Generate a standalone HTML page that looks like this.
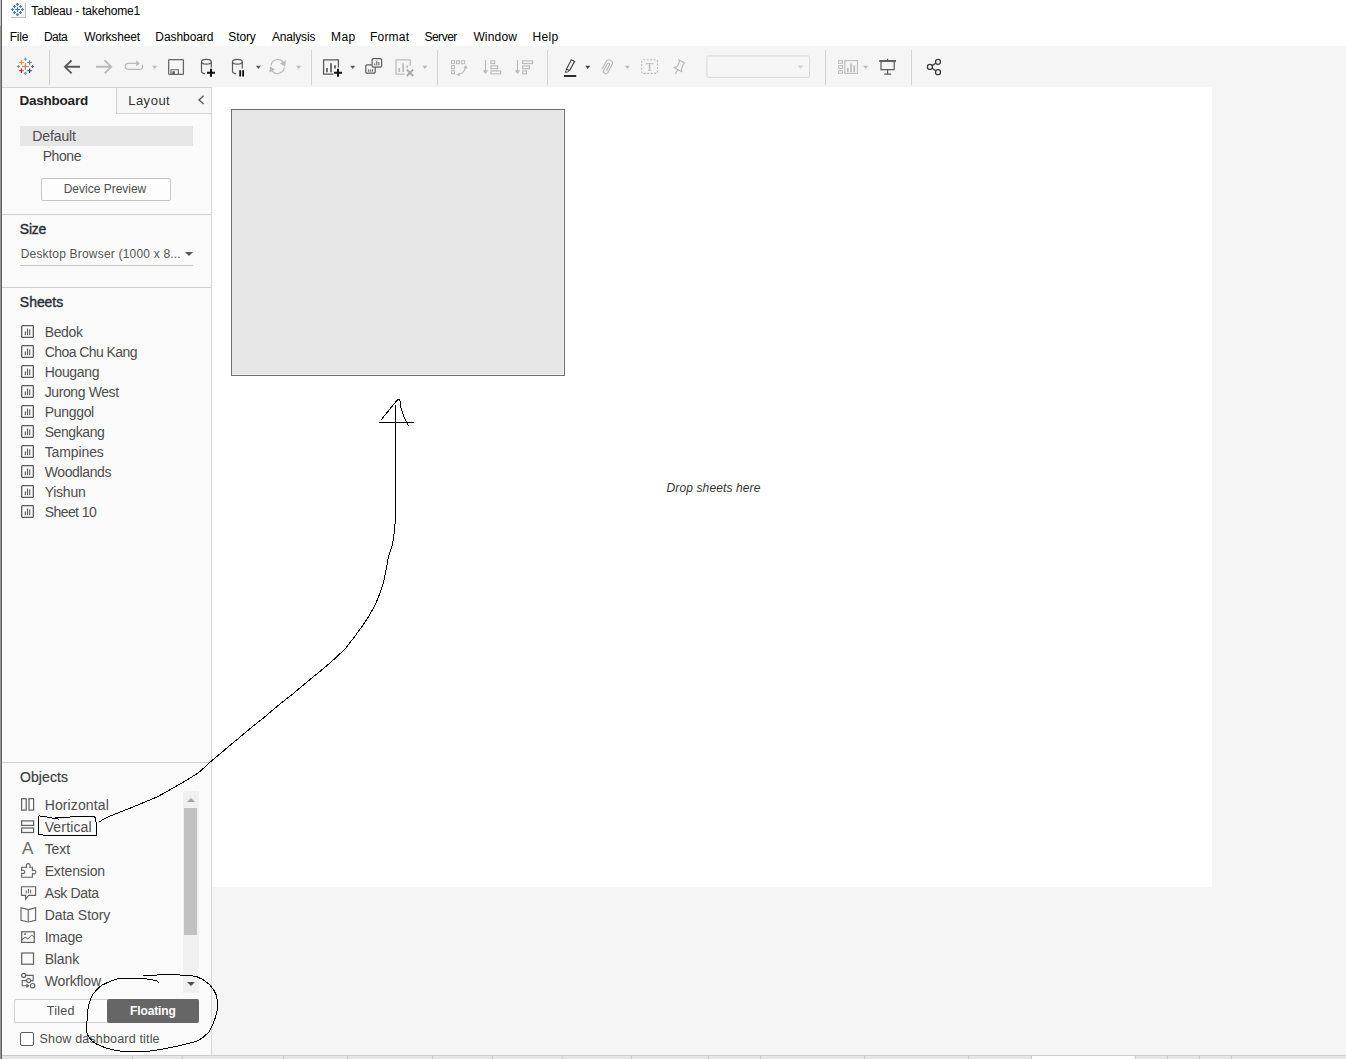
<!DOCTYPE html>
<html lang="en">
<head>
<meta charset="utf-8">
<title>Tableau - takehome1</title>
<style>
*{box-sizing:border-box;margin:0;padding:0}
html,body{width:1346px;height:1059px;overflow:hidden;background:#fff}
body{position:relative;font-family:"Liberation Sans",sans-serif;font-size:12px;color:#333}
.abs{position:absolute}
.t{position:absolute;white-space:nowrap;line-height:16px}
#titlebar{left:0;top:0;width:1346px;height:22px;background:#fff}
#menubar{left:0;top:22px;width:1346px;height:24px;background:#fff}
#menubar .t{top:6px;color:#000;font-size:12px}
#toolbar{left:0;top:46px;width:1346px;height:41px;background:#f5f5f5}
.vsep{position:absolute;width:1px;background:#d4d4d4;top:4px;height:35px}
#leftedge{left:0;top:0;width:2px;height:1059px;background:#5e5e5e;border-left:1px solid #969696}
#leftedge i{position:absolute;left:-1px;top:0;width:1px;height:26px;background:#c4c4c4}
#side{left:2px;top:87px;width:210px;height:968px;background:#fafafa;border-right:1px solid #d6d6d6}
.hdiv{position:absolute;left:0;width:209px;height:1px;background:#d0d0d0}
.sec{font-weight:bold;font-size:13px;color:#333}
.it{font-size:13px;color:#4a4a4a}
#work{left:212px;top:87px;width:1134px;height:968px;background:#f5f5f5}
#canvas{left:0;top:0;width:1000px;height:800px;background:#fff}
#box{left:19px;top:22px;width:334px;height:267px;background:#e6e6e6;border:1px solid #6e6e6e;box-shadow:inset -1px -1px 0 #f0f0f0}
#tabs{left:0;top:1055px;width:1346px;height:4px;background:#e6e6e6;border-top:1px solid #cdcdcd}
#tabs i{position:absolute;top:0;width:1px;height:4px;background:#c6c6c6}
#annot{left:0;top:0;width:1346px;height:1059px;pointer-events:none}
</style>
</head>
<body>
<div id="titlebar" class="abs">
  <svg class="abs" style="left:10px;top:2px" width="17" height="17" viewBox="10 2 17 17" fill="none">
    <rect x="11" y="2.9" width="13" height="13.2" fill="#f3f5f8"/>
    <path d="M25.4 2.9V17.4H11" stroke="#b6b6b6" stroke-width="1"/>
    <path d="M17.5 7.2v4.6M15.2 9.5h4.6" stroke="#41789e" stroke-width="1.1"/>
    <path d="M17.5 3v2.8M16.1 4.4h2.8M17.5 13.2v2.8M16.1 14.6h2.8M12.5 8.1v2.8M11.1 9.5h2.8M22.5 8.1v2.8M21.1 9.5h2.8M14.5 5.1v2.8M13.1 6.5h2.8M20.5 5.1v2.8M19.1 6.5h2.8M14.5 11.1v2.8M13.1 12.5h2.8M20.5 11.1v2.8M19.1 12.5h2.8" stroke="#41789e" stroke-width="1.2"/>
  </svg>
  <div id="t0" class="t" style="left:31.32px;top:3px;font-size:12px;letter-spacing:-0.18px;color:#000;">Tableau - takehome1</div>
</div>
<div id="menubar" class="abs">
  <div id="t1" class="t" style="left:9.78px;top:7px;font-size:12px;letter-spacing:-0.224px;color:#000;">File</div>
  <div id="t2" class="t" style="left:43.94px;top:7px;font-size:12px;letter-spacing:-0.568px;color:#000;">Data</div>
  <div id="t3" class="t" style="left:84.33px;top:7px;font-size:12px;letter-spacing:-0.184px;color:#000;">Worksheet</div>
  <div id="t4" class="t" style="left:155.31px;top:7px;font-size:12px;letter-spacing:-0.07px;color:#000;">Dashboard</div>
  <div id="t5" class="t" style="left:228.37px;top:7px;font-size:12px;letter-spacing:-0.141px;color:#000;">Story</div>
  <div id="t6" class="t" style="left:272.06px;top:7px;font-size:12px;letter-spacing:-0.192px;color:#000;">Analysis</div>
  <div id="t7" class="t" style="left:330.93px;top:7px;font-size:12px;letter-spacing:0.486px;color:#000;">Map</div>
  <div id="t8" class="t" style="left:370.05px;top:7px;font-size:12px;letter-spacing:0.192px;color:#000;">Format</div>
  <div id="t9" class="t" style="left:424.41px;top:7px;font-size:12px;letter-spacing:-0.482px;color:#000;">Server</div>
  <div id="t10" class="t" style="left:473.39px;top:7px;font-size:12px;letter-spacing:0.167px;color:#000;">Window</div>
  <div id="t11" class="t" style="left:532.62px;top:7px;font-size:12px;letter-spacing:0.276px;color:#000;">Help</div>
</div>
<div id="toolbar" class="abs">
  <div class="vsep" style="left:49px"></div>
  <div class="vsep" style="left:311px"></div>
  <div class="vsep" style="left:437px"></div>
  <div class="vsep" style="left:547px"></div>
  <div class="vsep" style="left:825px"></div>
  <div class="vsep" style="left:911px"></div>
  <svg class="abs" style="left:0;top:0" width="1346" height="41" viewBox="0 46 1346 41" fill="none" stroke-linecap="butt">
  <!-- tableau logo -->
  <g stroke-width="1.15">
    <path d="M25.4 63.2v6.6M22.1 66.5h6.6" stroke="#e8762d"/>
    <path d="M21.4 60.2v4.6M19.1 62.5h4.6" stroke="#eb9129"/>
    <path d="M29.6 60.2v4.6M27.3 62.5h4.6" stroke="#5b879b"/>
    <path d="M21.4 68.4v4.6M19.1 70.7h4.6" stroke="#c72037"/>
    <path d="M29.6 68.4v4.6M27.3 70.7h4.6" stroke="#1f457e"/>
    <path d="M25.4 57.7v3M23.9 59.2h3" stroke="#7099a6"/>
    <path d="M25.4 71.9v3M23.9 73.4h3" stroke="#7f8fa8"/>
    <path d="M18.5 65v3M17 66.5h3" stroke="#7099a6"/>
    <path d="M32.5 65v3M31 66.5h3" stroke="#5c6692"/>
  </g>
  <!-- back / forward -->
  <path d="M80 66.8H65.4M71.6 60.4L65 66.8L71.6 73.4" stroke="#5a5a5a" stroke-width="1.9"/>
  <path d="M96 66.8H110.8M104.6 60.4L111.2 66.8L104.6 73.4" stroke="#b9b9b9" stroke-width="1.9"/>
  <!-- redo loop -->
  <path d="M138 63.4H128.2a3 3 0 0 0 0 6H139.6a3 3 0 0 0 2.6-4.6" stroke="#b9b9b9" stroke-width="1.2"/>
  <path d="M136.2 60.2L139.8 63.4L136.2 66.6Z" fill="#b9b9b9" stroke="none"/>
  <path d="M152.2 65.8h5l-2.5 3.2z" fill="#b9b9b9"/>
  <!-- save -->
  <rect x="168.7" y="59.7" width="14.7" height="14.6" rx="0.6" stroke="#666" stroke-width="1.25"/>
  <path d="M171 74V69.7H178.4V74" stroke="#666" stroke-width="1.1"/>
  <rect x="172.3" y="71.3" width="2.5" height="3" fill="#5a5a5a"/>
  <!-- data source + -->
  <ellipse cx="206.4" cy="61.8" rx="4.9" ry="2.4" stroke="#5a5a5a" stroke-width="1.2"/>
  <path d="M201.5 61.8V71.4c0 1.2 1.4 2 3.6 2.4M211.3 61.8V67.6" stroke="#5a5a5a" stroke-width="1.2"/>
  <path d="M211 68.8v8M207 72.8h8" stroke="#111" stroke-width="2"/>
  <!-- data source pause -->
  <ellipse cx="237.4" cy="61.8" rx="4.9" ry="2.4" stroke="#5a5a5a" stroke-width="1.2"/>
  <path d="M232.5 61.8V71.4c0 1.2 1.4 2 3.6 2.4M242.3 61.8V68.4" stroke="#5a5a5a" stroke-width="1.2"/>
  <path d="M240.2 70.2v6.4M243.1 70.2v6.4" stroke="#111" stroke-width="1.8"/>
  <path d="M255.9 65.8h5l-2.5 3.2z" fill="#5a5a5a"/>
  <!-- refresh -->
  <path d="M271 65.6a6.8 6.8 0 0 1 12.2 -3.4M284.2 67.4a6.8 6.8 0 0 1 -12.2 3.4" stroke="#b9b9b9" stroke-width="1.2"/>
  <path d="M285.9 60.4L285.2 66.4L280 63.6Z M269.3 72.6L270 66.6L275.2 69.4Z" fill="#b9b9b9"/>
  <path d="M296.2 65.8h5l-2.5 3.2z" fill="#b9b9b9"/>
  <!-- new worksheet -->
  <path d="M338.4 67.4V59.8H323.6V74.2H333.4" stroke="#5a5a5a" stroke-width="1.3"/>
  <path d="M327 68v4.2M331 63.2v9M335 65.2v3.4" stroke="#5a5a5a" stroke-width="1.7"/>
  <path d="M338 68.8v8M334 72.8h8" stroke="#111" stroke-width="2"/>
  <path d="M350.2 65.8h5l-2.5 3.2z" fill="#5a5a5a"/>
  <!-- duplicate -->
  <path d="M371.6 64.8H367a1.2 1.2 0 0 0 -1.2 1.2V72a1.2 1.2 0 0 0 1.2 1.2H374a1.2 1.2 0 0 0 1.2 -1.2V67.6" stroke="#5a5a5a" stroke-width="1.2"/>
  <rect x="372.1" y="58.7" width="9.5" height="8.4" rx="1.3" stroke="#5a5a5a" stroke-width="1.2"/>
  <path d="M374.8 63.4v2M376.8 60.8v4.6M378.8 62v3.4M368.4 69.4v2.4M370.4 69.4v2.4M372.4 69.4v2.4" stroke="#5a5a5a" stroke-width="1"/>
  <!-- clear sheet -->
  <path d="M410.2 66V59.8H396V74.2H404.6" stroke="#b9b9b9" stroke-width="1.2"/>
  <path d="M399.2 68v4M403.2 63.2v8.8M407.2 65.2v2.6" stroke="#b9b9b9" stroke-width="1.7"/>
  <path d="M406.8 69.6L413.2 76M413.2 69.6L406.8 76" stroke="#a9a9a9" stroke-width="1.9"/>
  <path d="M422.4 65.8h5l-2.5 3.2z" fill="#b9b9b9"/>
  <!-- swap -->
  <g stroke="#b9b9b9" stroke-width="1">
    <rect x="451.5" y="60.7" width="3" height="3"/><rect x="456.6" y="60.7" width="3" height="3"/><rect x="461.7" y="60.7" width="3" height="3"/>
    <rect x="451.5" y="65.7" width="3" height="3"/><rect x="451.5" y="70.7" width="3" height="3"/>
    <path d="M458.6 74.4c4 -1 6.4 -3.6 7 -7.4" stroke-width="1.2"/>
  </g>
  <path d="M465.8 65L468 68.4L463.4 68Z M456.4 74.8L459.8 72.6L459.6 76.6Z" fill="#b9b9b9"/>
  <!-- sort asc -->
  <g stroke="#b9b9b9" stroke-width="1.1">
    <path d="M485.5 60v11"/>
    <rect x="490.9" y="60.8" width="3.8" height="2.8"/><rect x="490.9" y="65.9" width="6.8" height="2.8"/><rect x="490.9" y="71" width="9.8" height="2.8"/>
    <path d="M517.5 60v11"/>
    <rect x="522.7" y="60.8" width="9.8" height="2.8"/><rect x="522.7" y="65.9" width="6.8" height="2.8"/><rect x="522.7" y="71" width="3.8" height="2.8"/>
  </g>
  <path d="M482.8 70.2h5.4l-2.7 3.8z M514.8 70.2h5.4l-2.7 3.8z" fill="#b9b9b9"/>
  <!-- highlighter -->
  <path d="M571.4 59.8L574.6 61.4L569.6 70.6L566.4 69.2Z" stroke="#444" stroke-width="1.2"/>
  <path d="M566.6 69.4L565.2 72.4L567.4 72L569.4 70.8" stroke="#444" stroke-width="0.9"/>
  <path d="M564 76h12.2" stroke="#222" stroke-width="1.9"/>
  <path d="M585.2 65.8h5l-2.5 3.2z" fill="#444"/>
  <!-- paperclip -->
  <g transform="translate(607.2 66.6) rotate(208) scale(0.7) translate(-12.5 -12)"><path d="M17.25 6V17.5a4.75 4.75 0 0 1 -9.5 0V5a3.25 3.25 0 0 1 6.5 0V15.5a1.75 1.75 0 0 1 -3.5 0V6" stroke="#b9b9b9" stroke-width="1.6"/></g>
  <path d="M624.9 65.8h5l-2.5 3.2z" fill="#b9b9b9"/>
  <!-- text box -->
  <rect x="641.7" y="59.7" width="15.8" height="13.7" rx="1.5" stroke="#b9b9b9" stroke-width="1.15" stroke-dasharray="2 1.45"/>
  <!-- pin -->
  <path d="M678.7 59.7L684.8 62.9L683.3 64.1L681.3 69.5L682 71.8L673.9 67.6L676.4 66.7L677.7 65.9L679.6 61.2Z M677.7 69.9L675.2 74" stroke="#b9b9b9" stroke-width="1.15" stroke-linejoin="round"/>
  <!-- dropdown -->
  <rect x="706.9" y="55.9" width="102.6" height="21.4" rx="1.5" fill="#f6f6f6" stroke="#d9d9d9" stroke-width="1"/>
  <path d="M797.8 65.6h5.6l-2.8 3.2z" fill="#d0d0d0"/>
  <!-- show me -->
  <g stroke="#b9b9b9" stroke-width="1">
    <rect x="838.6" y="60.7" width="4" height="2.6"/><rect x="838.6" y="65.7" width="4" height="2.6"/><rect x="838.6" y="70.7" width="4" height="2.6"/>
    <rect x="844.8" y="60.6" width="12.6" height="12.8"/>
    <path d="M847.8 68v4.2M851 63.4v8.8M854.2 65.4v6.8" stroke-width="1.7"/>
  </g>
  <path d="M863.2 65.8h5l-2.5 3.2z" fill="#b9b9b9"/>
  <!-- presentation -->
  <path d="M879.2 61h16.8" stroke="#5a5a5a" stroke-width="1.9"/>
  <path d="M887.6 58.8v2M881 61.4V69.6H894.2V61.4M887.6 69.6V74.2M884.2 74.2H891.2" stroke="#5a5a5a" stroke-width="1.2"/>
  <!-- share -->
  <g stroke="#3a3a3a" stroke-width="1.3">
    <circle cx="938" cy="61.8" r="2.5"/><circle cx="929.9" cy="66.9" r="2.5"/><circle cx="938" cy="72.2" r="2.5"/>
    <path d="M932.1 65.6L935.8 63.2M932.1 68.3L935.8 70.8"/>
  </g>
</svg>
<div class="t" style="left:644px;top:13px;width:11px;text-align:center;font-family:'Liberation Serif',serif;font-size:11.5px;line-height:16px;color:#adadad">T</div>
</div>
<div id="side" class="abs">
  <div id="t12" class="t" style="left:17.51px;top:6px;font-size:13.5px;letter-spacing:-0.232px;font-weight:bold;color:#1f1f1f;">Dashboard</div>
  <div class="abs" style="left:114px;top:0;width:95px;height:27px;border-left:1px solid #d2d2d2;border-bottom:1px solid #d2d2d2;background:#f7f7f7"></div>
  <div class="hdiv" style="top:0;background:#d4d4d4"></div>
  <div id="t13" class="t" style="left:126.15px;top:6px;font-size:13px;letter-spacing:0.512px;color:#333;">Layout</div>
  <svg class="abs" style="left:194px;top:7px" width="10" height="12" viewBox="0 0 10 12" fill="none" stroke="#555" stroke-width="1.3"><path d="M7.6 1.8 L3 5.9 L7.6 10"/></svg>
  <div class="abs" style="left:18px;top:39px;width:173px;height:20px;background:#e6e6e6"></div>
  <div id="t14" class="t" style="left:30.34px;top:41px;font-size:14px;letter-spacing:-0.123px;color:#4d4d4d;">Default</div>
  <div id="t15" class="t" style="left:40.64px;top:61px;font-size:14px;letter-spacing:-0.408px;color:#4d4d4d;">Phone</div>
  <div class="abs" style="left:39px;top:91px;width:130px;height:23px;border:1px solid #c6c6c6;border-radius:2px;background:#fdfdfd"></div>
  <div id="t16" class="t" style="left:61.71px;top:94px;font-size:12px;letter-spacing:-0.009px;color:#4d4d4d;">Device Preview</div>
  <div class="hdiv" style="top:127px"></div>
  <div id="t17" class="t" style="left:17.79px;top:134px;font-size:14px;letter-spacing:-0.241px;-webkit-text-stroke:0.4px #2b2f36;color:#2b2f36;">Size</div>
  <div id="t18" class="t" style="left:18.67px;top:159px;font-size:12px;letter-spacing:0.196px;color:#555;">Desktop Browser (1000 x 8...</div>
  <div class="abs" style="left:18px;top:178px;width:173px;height:1px;background:#c8c8c8"></div>
  <div class="abs" style="left:183px;top:165px;width:0;height:0;border-left:4px solid transparent;border-right:4px solid transparent;border-top:4px solid #555"></div>
  <div class="hdiv" style="top:200px"></div>
  <div id="t19" class="t" style="left:17.87px;top:207px;font-size:14px;letter-spacing:-0.054px;-webkit-text-stroke:0.4px #2b2f36;color:#2b2f36;">Sheets</div>
  <svg class="abs" style="left:19px;top:238px" width="13" height="13" viewBox="0 0 13 13"><rect x="0.65" y="0.65" width="11.7" height="11.7" rx="0.8" fill="none" stroke="#5c5c5c" stroke-width="1.3"/><path d="M4.35 6.4v3.8M6.5 3.6v6.6M8.65 4.4v5.8" stroke="#5c5c5c" stroke-width="1.15" fill="none"/></svg>
  <div id="t20" class="t" style="left:42.65px;top:237px;font-size:14px;letter-spacing:-0.326px;color:#4d4d4d;">Bedok</div>
  <svg class="abs" style="left:19px;top:258px" width="13" height="13" viewBox="0 0 13 13"><rect x="0.65" y="0.65" width="11.7" height="11.7" rx="0.8" fill="none" stroke="#5c5c5c" stroke-width="1.3"/><path d="M4.35 6.4v3.8M6.5 3.6v6.6M8.65 4.4v5.8" stroke="#5c5c5c" stroke-width="1.15" fill="none"/></svg>
  <div id="t21" class="t" style="left:42.65px;top:257px;font-size:14px;letter-spacing:-0.554px;color:#4d4d4d;">Choa Chu Kang</div>
  <svg class="abs" style="left:19px;top:278px" width="13" height="13" viewBox="0 0 13 13"><rect x="0.65" y="0.65" width="11.7" height="11.7" rx="0.8" fill="none" stroke="#5c5c5c" stroke-width="1.3"/><path d="M4.35 6.4v3.8M6.5 3.6v6.6M8.65 4.4v5.8" stroke="#5c5c5c" stroke-width="1.15" fill="none"/></svg>
  <div id="t22" class="t" style="left:42.65px;top:277px;font-size:14px;letter-spacing:-0.322px;color:#4d4d4d;">Hougang</div>
  <svg class="abs" style="left:19px;top:298px" width="13" height="13" viewBox="0 0 13 13"><rect x="0.65" y="0.65" width="11.7" height="11.7" rx="0.8" fill="none" stroke="#5c5c5c" stroke-width="1.3"/><path d="M4.35 6.4v3.8M6.5 3.6v6.6M8.65 4.4v5.8" stroke="#5c5c5c" stroke-width="1.15" fill="none"/></svg>
  <div id="t23" class="t" style="left:42.65px;top:297px;font-size:14px;letter-spacing:-0.387px;color:#4d4d4d;">Jurong West</div>
  <svg class="abs" style="left:19px;top:318px" width="13" height="13" viewBox="0 0 13 13"><rect x="0.65" y="0.65" width="11.7" height="11.7" rx="0.8" fill="none" stroke="#5c5c5c" stroke-width="1.3"/><path d="M4.35 6.4v3.8M6.5 3.6v6.6M8.65 4.4v5.8" stroke="#5c5c5c" stroke-width="1.15" fill="none"/></svg>
  <div id="t24" class="t" style="left:42.65px;top:317px;font-size:14px;letter-spacing:-0.299px;color:#4d4d4d;">Punggol</div>
  <svg class="abs" style="left:19px;top:338px" width="13" height="13" viewBox="0 0 13 13"><rect x="0.65" y="0.65" width="11.7" height="11.7" rx="0.8" fill="none" stroke="#5c5c5c" stroke-width="1.3"/><path d="M4.35 6.4v3.8M6.5 3.6v6.6M8.65 4.4v5.8" stroke="#5c5c5c" stroke-width="1.15" fill="none"/></svg>
  <div id="t25" class="t" style="left:42.65px;top:337px;font-size:14px;letter-spacing:-0.412px;color:#4d4d4d;">Sengkang</div>
  <svg class="abs" style="left:19px;top:358px" width="13" height="13" viewBox="0 0 13 13"><rect x="0.65" y="0.65" width="11.7" height="11.7" rx="0.8" fill="none" stroke="#5c5c5c" stroke-width="1.3"/><path d="M4.35 6.4v3.8M6.5 3.6v6.6M8.65 4.4v5.8" stroke="#5c5c5c" stroke-width="1.15" fill="none"/></svg>
  <div id="t26" class="t" style="left:42.65px;top:357px;font-size:14px;letter-spacing:-0.106px;color:#4d4d4d;">Tampines</div>
  <svg class="abs" style="left:19px;top:378px" width="13" height="13" viewBox="0 0 13 13"><rect x="0.65" y="0.65" width="11.7" height="11.7" rx="0.8" fill="none" stroke="#5c5c5c" stroke-width="1.3"/><path d="M4.35 6.4v3.8M6.5 3.6v6.6M8.65 4.4v5.8" stroke="#5c5c5c" stroke-width="1.15" fill="none"/></svg>
  <div id="t27" class="t" style="left:42.65px;top:377px;font-size:14px;letter-spacing:-0.364px;color:#4d4d4d;">Woodlands</div>
  <svg class="abs" style="left:19px;top:398px" width="13" height="13" viewBox="0 0 13 13"><rect x="0.65" y="0.65" width="11.7" height="11.7" rx="0.8" fill="none" stroke="#5c5c5c" stroke-width="1.3"/><path d="M4.35 6.4v3.8M6.5 3.6v6.6M8.65 4.4v5.8" stroke="#5c5c5c" stroke-width="1.15" fill="none"/></svg>
  <div id="t28" class="t" style="left:42.65px;top:397px;font-size:14px;letter-spacing:-0.237px;color:#4d4d4d;">Yishun</div>
  <svg class="abs" style="left:19px;top:418px" width="13" height="13" viewBox="0 0 13 13"><rect x="0.65" y="0.65" width="11.7" height="11.7" rx="0.8" fill="none" stroke="#5c5c5c" stroke-width="1.3"/><path d="M4.35 6.4v3.8M6.5 3.6v6.6M8.65 4.4v5.8" stroke="#5c5c5c" stroke-width="1.15" fill="none"/></svg>
  <div id="t29" class="t" style="left:42.65px;top:417px;font-size:14px;letter-spacing:-0.553px;color:#4d4d4d;">Sheet 10</div>
  <div class="hdiv" style="top:675px"></div>
  <div id="t30" class="t" style="left:17.89px;top:682px;font-size:14px;letter-spacing:0.126px;-webkit-text-stroke:0.2px #3c3c3c;color:#3c3c3c;">Objects</div>
  <svg class="abs" style="left:0;top:703px" width="60" height="210" viewBox="2 790 60 210" fill="none" stroke="#606060" stroke-width="1.2">
  <rect x="21.6" y="798.7" width="4.6" height="11.4"/><rect x="29" y="798.7" width="4.6" height="11.4"/>
  <rect x="21.6" y="820.9" width="12" height="4.5"/><rect x="21.6" y="828" width="12" height="4.5"/>
  <path d="M26.6 867.2c-0.9-2.2 0.2-3.6 1.6-3.6s2.5 1.4 1.6 3.6H32.4V870.6c2.2-0.9 3.4 0.2 3.4 1.5s-1.2 2.4-3.4 1.5V877.2H21.6V873.2c2 0.8 3.2-0.1 3.2-1.3s-1.2-2.1-3.2-1.3V867.2Z" stroke-width="1.1"/>
  <path d="M21.5 886.8H35.6V895.4H28.6L25.6 899.2V895.4H21.5Z" stroke-width="1.1"/>
  <path d="M26.2 890.4v3M28.4 888.8v4.6M30.6 889.6v3.8" stroke-width="1"/>
  <path d="M28.3 909.6L21 907.8V920.2L28.3 922L35.6 920.2V907.8Z" stroke-width="1.1"/>
  <path d="M28.3 909.6V922" stroke-width="1.6" stroke="#8a8a8a"/>
  <rect x="21.7" y="931.8" width="12.6" height="10.6"/>
  <path d="M21.8 939.6L25.2 937.2L27.8 938.9L31.8 935L34.4 937.6" stroke-width="1"/>
  <circle cx="25" cy="934.2" r="0.9" fill="#606060" stroke="none"/>
  <rect x="21.7" y="953" width="11.8" height="11.2"/>
  <g stroke-width="1.1">
  <circle cx="23.7" cy="975.4" r="2"/><circle cx="28.6" cy="980.6" r="2"/><circle cx="32.6" cy="985.7" r="2.2"/>
  <path d="M25.7 975.4H33.2V980.6H30.6M26.6 980.6H22.2V985.7H27"/>
  </g>
  <path d="M26.4 983.4L29.6 985.7L26.4 988Z" fill="#606060" stroke="none"/>
</svg>
<div class="t" style="left:18.6px;top:752px;font-size:17px;line-height:20px;color:#6a6a6a;width:14px;text-align:center">A</div>
  <div id="t31" class="t" style="left:42.65px;top:710px;font-size:14px;letter-spacing:0.129px;color:#4d4d4d;">Horizontal</div>
  <div id="t32" class="t" style="left:42.65px;top:732px;font-size:14px;letter-spacing:0.159px;color:#4d4d4d;">Vertical</div>
  <div id="t33" class="t" style="left:42.65px;top:754px;font-size:14px;letter-spacing:-0.03px;color:#4d4d4d;">Text</div>
  <div id="t34" class="t" style="left:42.65px;top:776px;font-size:14px;letter-spacing:-0.121px;color:#4d4d4d;">Extension</div>
  <div id="t35" class="t" style="left:42.65px;top:798px;font-size:14px;letter-spacing:-0.332px;color:#4d4d4d;">Ask Data</div>
  <div id="t36" class="t" style="left:42.65px;top:820px;font-size:14px;letter-spacing:-0.048px;color:#4d4d4d;">Data Story</div>
  <div id="t37" class="t" style="left:42.65px;top:842px;font-size:14px;letter-spacing:-0.16px;color:#4d4d4d;">Image</div>
  <div id="t38" class="t" style="left:42.65px;top:864px;font-size:14px;letter-spacing:-0.113px;color:#4d4d4d;">Blank</div>
  <div id="t39" class="t" style="left:42.65px;top:886px;font-size:14px;letter-spacing:-0.125px;color:#4d4d4d;">Workflow</div>
  <div class="abs" style="left:181px;top:704px;width:16px;height:202px;background:#f0f0f0"></div>
  <div class="abs" style="left:182px;top:721px;width:13px;height:127px;background:#c1c1c1"></div>
  <div class="abs" style="left:185px;top:711px;width:0;height:0;border-left:4px solid transparent;border-right:4px solid transparent;border-bottom:4px solid #a3a3a3"></div>
  <div class="abs" style="left:185px;top:895px;width:0;height:0;border-left:4px solid transparent;border-right:4px solid transparent;border-top:4px solid #505050"></div>
  <div class="abs" style="left:12px;top:912px;width:94px;height:24px;border:1px solid #cfcfcf;border-radius:2px 0 0 2px;background:#fcfcfc"></div>
  <div id="t40" class="t" style="left:44.87px;top:916px;font-size:12.5px;letter-spacing:0.214px;color:#4d4d4d;">Tiled</div>
  <div class="abs" style="left:105px;top:912px;width:92px;height:24px;background:#666;border-radius:2px"></div>
  <div id="t41" class="t" style="left:128.07px;top:916px;font-size:12px;letter-spacing:-0.128px;font-weight:bold;color:#fff;">Floating</div>
  <div class="abs" style="left:18px;top:945px;width:14px;height:14px;border:1.3px solid #5c5c5c;background:#fff;border-radius:2px"></div>
  <div id="t42" class="t" style="left:37.61px;top:944px;font-size:12.5px;letter-spacing:0.167px;color:#4d4d4d;">Show dashboard title</div>
</div>
<div id="work" class="abs">
  <div id="canvas" class="abs">
    <div id="box" class="abs"></div>
    <div id="t43" class="t" style="left:454.56px;top:393px;font-size:12px;letter-spacing:0.119px;font-style:italic;color:#333;">Drop sheets here</div>
  </div>
</div>
<div id="tabs" class="abs">
  <i style="left:132px"></i><i style="left:182px"></i><i style="left:283px"></i><i style="left:347px"></i><i style="left:432px"></i><i style="left:492px"></i><i style="left:562px"></i><i style="left:631px"></i><i style="left:708px"></i><i style="left:760px"></i><i style="left:864px"></i><i style="left:968px"></i><i style="left:1031px"></i><i style="left:1135px"></i><i style="left:1167px"></i><i style="left:1199px"></i><i style="left:1231px"></i><div class="abs" style="left:1032px;top:0;width:103px;height:4px;background:#fdfdfd"></div>
</div>
<div id="leftedge" class="abs"><i></i></div>
<svg id="annot" class="abs" viewBox="0 0 1346 1059" fill="none" stroke="#000" stroke-width="1" shape-rendering="crispEdges">
  
  <!-- arrow shaft and curve from Vertical to the box -->
  <path d="M395.5 405 L395.5 518 C395 530 393.5 538 392.6 543.5 C391 550 389.5 553 388 559 C386.5 568 385 576 383 584 C380.5 592 378 599 374.5 606 C371 613 367.5 619 363 625 C357.5 633 351.5 641 345 649 C336 658 326 667 315.6 675 C308 681 301 687 294 693 C283 701.5 272.5 710 262.3 719 C254 725 246 732 239 738 C229 746 220 754 210.7 761.6 C206.5 765.5 202.5 769.5 198 773 C190.5 778 183 782.5 175.6 786.5 C169.5 790 163.5 793.5 157.5 796.7 C147.5 801 138 805 128 809 C121.5 811.5 115 814 108.7 816.7 C105.5 818.2 102.5 819.8 99.5 821.7"/>
  <!-- arrow head -->
  <path d="M379 422.5 L414 422.5"/>
  <path d="M381.6 419.7 L381.9 418.9 L396 401.5 L398.5 399 L399.7 399 L401 408 L404 417 L408.7 426.3"/>
  <!-- box round Vertical -->
  <path d="M38.5 815.9 L45 816.5 L52 818 L59.5 819.2 M55.5 817.6 L62 817.2 L86 816.6 L94.7 816.2 L95.6 820 L96.6 824 L96.5 832.8 L96 835.7 M96 835.6 L62 835.6 L45.7 835.4 L41 834.6 L38.4 834.2 L38.3 825 L38.5 815.9"/>
  <!-- circle round Floating -->
  <path d="M158.4 982.8 L157.8 981.2 C154 979.8 150 979.2 145.8 978.9 C136 978.4 127 978.3 118 978.7 C112 980.5 106.5 982.8 101.6 985.3 C97.5 988.5 94.5 991.8 92.1 995.4 C89.8 1000 88.4 1005 87.7 1010.5 C87 1018 86.8 1026 87 1033.2 C88.5 1037.5 91.5 1040.8 95.3 1043.4 C102 1047 110 1049.5 118 1050.9 C129 1051.7 141 1051.7 152.1 1050.9 C167 1048.6 182 1045.3 196.3 1041.5 C201.5 1039 205.5 1035.8 208.9 1032 C213 1025.5 215.8 1018 217.1 1010.5 C217.6 1005 217.4 1000 216.5 995.4 C214.8 991 212.2 987.2 208.9 984 C205.3 980.8 201 978.2 196.3 976.4 C190 975.3 184 974.9 177.4 974.9 C166 974.8 154.5 975 143.3 975.4"/>

</svg>
</body>
</html>
